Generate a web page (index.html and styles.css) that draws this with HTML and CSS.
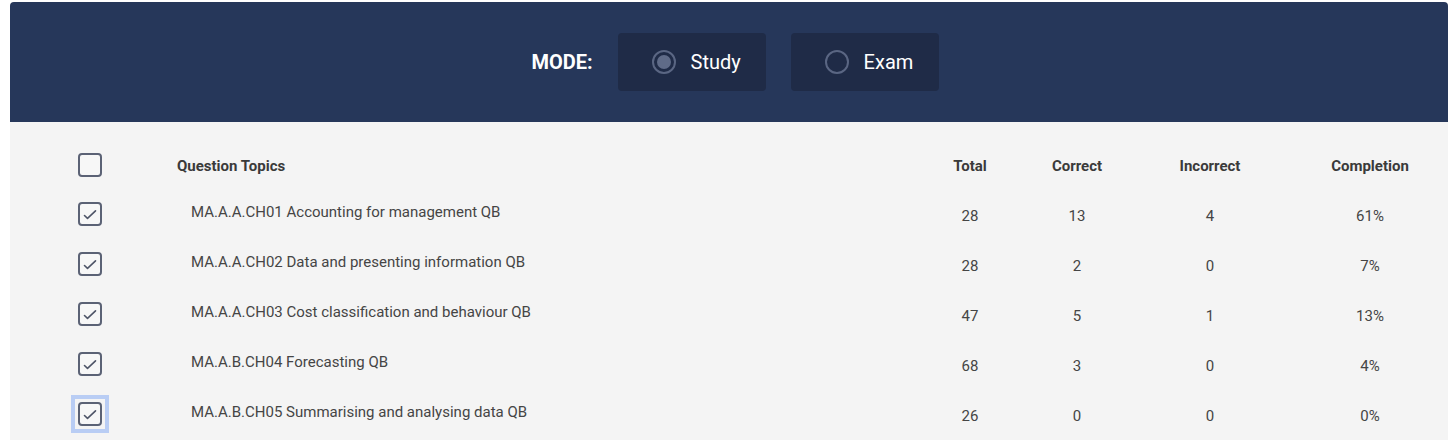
FILE: index.html
```html
<!DOCTYPE html>
<html lang="en">
<head>
<meta charset="utf-8">
<title>Question Bank</title>
<link rel="stylesheet" href="styles.css">
</head>
<body>
<div class="app">
  <header class="mode-bar">
    <span class="mode-label">MODE:</span>
    <button class="mode-btn">
      <span class="radio radio-on"></span>
      <span class="mode-text">Study</span>
    </button>
    <button class="mode-btn">
      <span class="radio"></span>
      <span class="mode-text">Exam</span>
    </button>
  </header>
  <section class="topics">
    <div class="row head">
      <div class="cb-cell"><span class="cb"></span></div>
      <div class="topic">Question Topics</div>
      <div class="num">Total</div>
      <div class="num">Correct</div>
      <div class="num">Incorrect</div>
      <div class="num">Completion</div>
    </div>
    <div class="row">
      <div class="cb-cell"><span class="cb checked"><svg viewBox="0 0 20 20"><path d="M4.5 11.5L7.5 14.3L15.5 6.8"/></svg></span></div>
      <div class="topic item">MA.A.A.CH01 Accounting for management QB</div>
      <div class="num">28</div>
      <div class="num">13</div>
      <div class="num">4</div>
      <div class="num">61%</div>
    </div>
    <div class="row">
      <div class="cb-cell"><span class="cb checked"><svg viewBox="0 0 20 20"><path d="M4.5 11.5L7.5 14.3L15.5 6.8"/></svg></span></div>
      <div class="topic item">MA.A.A.CH02 Data and presenting information QB</div>
      <div class="num">28</div>
      <div class="num">2</div>
      <div class="num">0</div>
      <div class="num">7%</div>
    </div>
    <div class="row">
      <div class="cb-cell"><span class="cb checked"><svg viewBox="0 0 20 20"><path d="M4.5 11.5L7.5 14.3L15.5 6.8"/></svg></span></div>
      <div class="topic item">MA.A.A.CH03 Cost classification and behaviour QB</div>
      <div class="num">47</div>
      <div class="num">5</div>
      <div class="num">1</div>
      <div class="num">13%</div>
    </div>
    <div class="row">
      <div class="cb-cell"><span class="cb checked"><svg viewBox="0 0 20 20"><path d="M4.5 11.5L7.5 14.3L15.5 6.8"/></svg></span></div>
      <div class="topic item">MA.A.B.CH04 Forecasting QB</div>
      <div class="num">68</div>
      <div class="num">3</div>
      <div class="num">0</div>
      <div class="num">4%</div>
    </div>
    <div class="row">
      <div class="cb-cell"><span class="focus-ring"><span class="cb checked"><svg viewBox="0 0 20 20"><path d="M4.5 11.5L7.5 14.3L15.5 6.8"/></svg></span></span></div>
      <div class="topic item">MA.A.B.CH05 Summarising and analysing data QB</div>
      <div class="num">26</div>
      <div class="num">0</div>
      <div class="num">0</div>
      <div class="num">0%</div>
    </div>
  </section>
</div>
</body>
</html>
```
FILE: styles.css
```css
html, body {
  margin: 0;
  padding: 0;
  background: #ffffff;
  overflow: hidden;
}
body {
  padding: 2px 0 0 10px;
  font-family: Roboto, "Liberation Sans", Arial, sans-serif;
}
.app {
  width: 1438px;
}
.mode-bar {
  height: 120px;
  background: #26375a;
  border-radius: 4px 4px 0 0;
  display: flex;
  align-items: center;
  justify-content: center;
  gap: 25px;
  padding-left: 12px;
  box-sizing: border-box;
}
.mode-label {
  color: #ffffff;
  font-weight: 700;
  font-size: 20px;
}
.mode-btn {
  width: 148px;
  height: 58px;
  border: none;
  border-radius: 4px;
  background: #1f2b47;
  display: flex;
  align-items: center;
  gap: 15px;
  padding: 0 0 0 34px;
  box-sizing: border-box;
  font-family: inherit;
  cursor: pointer;
}
.radio {
  width: 24px;
  height: 24px;
  box-sizing: border-box;
  border: 2px solid #5a6683;
  border-radius: 50%;
  display: flex;
  align-items: center;
  justify-content: center;
  flex: none;
}
.radio-on::after {
  content: "";
  width: 14px;
  height: 14px;
  border-radius: 50%;
  background: #5f6b88;
}
.mode-text {
  color: #ffffff;
  font-size: 20px;
}
.topics {
  background: #f4f4f4;
  padding: 18px 0 0 68px;
  height: 318px;
  box-sizing: border-box;
}
.row {
  display: grid;
  grid-template-columns: 99px 733px 120px 94px 172px 148px;
  height: 50px;
  align-items: center;
  color: #454545;
  font-size: 15px;
}
.row .num {
  padding-top: 2px;
}
.row.head {
  font-weight: 700;
  color: #3a3a3a;
  font-size: 15px;
}
.row.head .topic,
.row.head .num {
  padding-top: 2px;
}
.cb-cell {
  display: flex;
  align-items: center;
  height: 100%;
}
.row:not(.head) .cb-cell {
  padding-bottom: 2px;
  box-sizing: border-box;
}
.cb {
  width: 24px;
  height: 24px;
  box-sizing: border-box;
  border: 2px solid #5b6275;
  border-radius: 4px;
  background: #f7f7f7;
  display: block;
}
.cb svg {
  display: block;
  width: 20px;
  height: 20px;
  fill: none;
  stroke: #4f5568;
  stroke-width: 1.6;
  stroke-linecap: round;
  stroke-linejoin: round;
}
.focus-ring {
  display: block;
  margin: -7px;
  padding: 3px;
  border: 4px solid #b9cdf4;
}
.topic.item {
  padding-left: 14px;
  padding-bottom: 7px;
}
.num {
  text-align: center;
}
```
